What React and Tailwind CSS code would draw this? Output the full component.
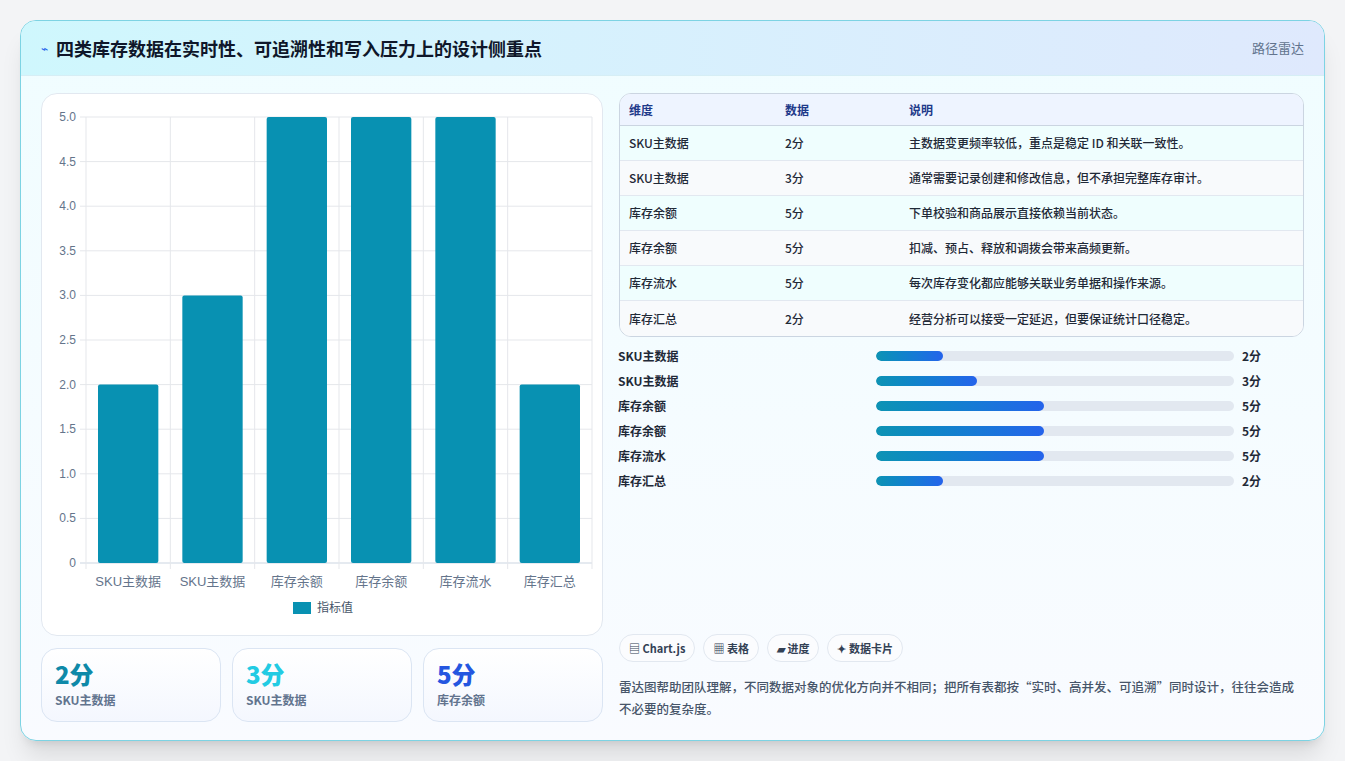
const ROWS = [
  ["SKU主数据", 2, "主数据变更频率较低，重点是稳定 ID 和关联一致性。"],
  ["SKU主数据", 3, "通常需要记录创建和修改信息，但不承担完整库存审计。"],
  ["库存余额", 5, "下单校验和商品展示直接依赖当前状态。"],
  ["库存余额", 5, "扣减、预占、释放和调拨会带来高频更新。"],
  ["库存流水", 5, "每次库存变化都应能够关联业务单据和操作来源。"],
  ["库存汇总", 2, "经营分析可以接受一定延迟，但要保证统计口径稳定。"],
]
const LABELS = ["SKU主数据", "SKU主数据", "库存余额", "库存余额", "库存流水", "库存汇总"]
const VALS = [2, 3, 5, 5, 5, 2]

function Chart() {
  const L = 44, R = 550, T = 23, B = 469
  const cw = (R - L) / 6
  const ticks = [0, 0.5, 1, 1.5, 2, 2.5, 3, 3.5, 4, 4.5, 5]
  const y = (v) => B - (v / 5) * (B - T)
  return (
    <svg width="562" height="543" className="block" style={{ fontFamily: "'Liberation Sans','Noto Sans CJK SC',sans-serif" }}>
      {ticks.map((t) => (
        <g key={t}>
          <line x1={L - 6} x2={R} y1={y(t)} y2={y(t)} stroke={t === 0 ? "#cbd5e1" : "#e5e7eb"} />
          <text x={L - 10} y={y(t) + 4} textAnchor="end" fontSize="12" fill="#64748b">{t === 0 ? "0" : t.toFixed(1)}</text>
        </g>
      ))}
      {[0, 1, 2, 3, 4, 5, 6].map((i) => (
        <line key={i} x1={L + i * cw} x2={L + i * cw} y1={T} y2={B + 6} stroke="#e5e7eb" />
      ))}
      {VALS.map((v, i) => (
        <rect key={i} x={L + i * cw + 12} y={y(v)} width={cw - 24} height={B - y(v)} rx="2" fill="#0891b2" />
      ))}
      {LABELS.map((l, i) => (
        <text key={i} x={L + i * cw + cw / 2} y={492} textAnchor="middle" fontSize="13" fill="#64748b">{l}</text>
      ))}
      <rect x="251" y="508" width="18" height="12" fill="#0891b2" />
      <text x="275" y="518" fontSize="12" fill="#475569">指标值</text>
    </svg>
  )
}

export default function App() {
  return (
    <div className="w-[1345px] h-[761px] bg-[#f3f4f6] p-5 pb-0" style={{ fontFamily: "'Noto Sans CJK SC','Liberation Sans',sans-serif" }}>
      <div className="h-[721px] rounded-2xl border border-[#7dd3e3] bg-gradient-to-b from-[#f0fdff] to-[#f9fbff] shadow-xl overflow-hidden flex flex-col">
        <div className="h-[55px] shrink-0 flex items-center justify-between px-5 bg-gradient-to-r from-[#cff7fd] to-[#dfe9fd] border-b border-[#d6eef5]">
          <div className="flex items-center gap-2">
            <span className="text-[#2563eb] text-xs">⌁</span>
            <h1 className="text-lg font-bold text-[#0f172a]">四类库存数据在实时性、可追溯性和写入压力上的设计侧重点</h1>
          </div>
          <span className="text-[13px] text-slate-500">路径雷达</span>
        </div>
        <div className="flex-1 flex gap-4 px-5 pt-[17px]">
          <div className="w-[562px] flex flex-col gap-3">
            <div className="h-[543px] rounded-2xl border border-[#e2e8f0] bg-white overflow-hidden"><Chart /></div>
            <div className="flex gap-[11px]">
              {[["2分", "SKU主数据", "text-[#0e89a8]"], ["3分", "SKU主数据", "text-[#22cbe3]"], ["5分", "库存余额", "text-[#2456e0]"]].map(([v, l, c], i) => (
                <div key={i} className="w-[180px] h-[74px] rounded-2xl border border-[#dbe5f3] bg-gradient-to-b from-white to-[#f4f7fe] px-[13px] pt-[11px]">
                  <div className={`text-2xl font-extrabold leading-7 ${c}`}>{v}</div>
                  <div className="text-xs text-slate-500 font-semibold mt-1">{l}</div>
                </div>
              ))}
            </div>
          </div>
          <div className="w-[688px] flex flex-col">
            <div className="rounded-xl border border-[#cbd5e1] overflow-hidden bg-white text-xs">
              <div className="h-8 flex items-center bg-[#eef4ff] text-[#1e3a8a] font-semibold border-b border-[#cbd5e1]">
                <div className="w-[165px] pl-[9px]">维度</div><div className="w-[124px]">数据</div><div>说明</div>
              </div>
              {ROWS.map((r, i) => (
                <div key={i} className={`h-[35px] flex items-center text-[#1f2937] font-medium border-b last:border-b-0 border-[#e2e8f0] ${i % 2 ? "bg-[#f8fafc]" : "bg-[#effefe]"}`}>
                  <div className="w-[165px] pl-[9px]">{r[0]}</div><div className="w-[124px]">{r[1]}分</div><div>{r[2]}</div>
                </div>
              ))}
            </div>
            <div className="mt-[11px] flex flex-col gap-[9px]">
              {ROWS.map((r, i) => (
                <div key={i} className="h-4 flex items-center text-xs font-semibold text-[#1f2937]">
                  <div className="w-[258px] -ml-px">{r[0]}</div>
                  <div className="w-[358px] h-[10px] rounded-full bg-[#e2e8f0] overflow-hidden">
                    <div className="h-full rounded-full bg-gradient-to-r from-[#0e93b4] to-[#2563eb]" style={{ width: r[1] * 33.6 }} />
                  </div>
                  <div className="ml-2">{r[1]}分</div>
                </div>
              ))}
            </div>
            <div className="mt-auto pb-[20px]">
              <div className="flex gap-2 mb-[14px]">
                {["▤ Chart.js", "▦ 表格", "▰ 进度", "✦ 数据卡片"].map((t) => (
                  <span key={t} className="h-7 px-[9px] rounded-full border border-[#e2e8f0] bg-[#fbfcfe] flex items-center text-[11px] font-semibold text-[#334155]">{t}</span>
                ))}
              </div>
              <p className="text-[12.5px] leading-[22px] text-[#475569] font-medium">雷达图帮助团队理解，不同数据对象的优化方向并不相同；把所有表都按“实时、高并发、可追溯”同时设计，往往会造成不必要的复杂度。</p>
            </div>
          </div>
        </div>
      </div>
    </div>
  )
}
